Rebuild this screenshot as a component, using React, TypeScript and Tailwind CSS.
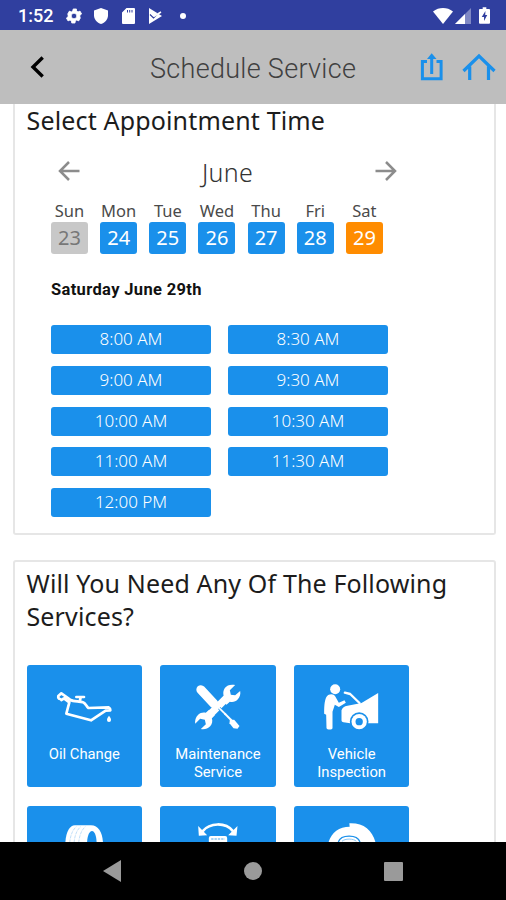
import { ReactNode } from "react";
import clsx from "clsx";

interface Service {
    id: string
    name?: string
    viewBox: string
    icon: ReactNode
}

const days = [
    { label: "Sun", date: 23, status: "disabled" },
    { label: "Mon", date: 24, status: "open" },
    { label: "Tue", date: 25, status: "open" },
    { label: "Wed", date: 26, status: "open" },
    { label: "Thu", date: 27, status: "open" },
    { label: "Fri", date: 28, status: "open" },
    { label: "Sat", date: 29, status: "selected" },
]

const times = ["8:00 AM", "8:30 AM", "9:00 AM", "9:30 AM", "10:00 AM", "10:30 AM", "11:00 AM", "11:30 AM", "12:00 PM"]

const services: Service[] = [
    {
        id: "oil",
        name: "Oil Change",
        viewBox: "108 80 171 150",
        icon: <>
            <path d="M120 131c-5-1-6-5-5-9l9-8 20 14 8 6c8 5 28 3 37 7 8 3 10 12 16 17l61-2 4 4 1 5-14 1-44 29-74-20 9-34-16-12-8 5" fill="none" stroke="white" strokeWidth="8" strokeLinejoin="round" strokeLinecap="round" />
            <path d="M169 125h23M182 126l-3 13" stroke="white" strokeWidth="8" strokeLinecap="round" />
            <path d="M267 181c4 5 6 9 6 13a6 6 0 0 1-12 0c0-4 2-8 6-13z" fill="white" />
        </>,
    },
    {
        id: "maintenance",
        name: "Maintenance Service",
        viewBox: "110.5 80 171 150",
        icon: <>
            <path d="M146 103l39 42" stroke="white" strokeWidth="27" strokeLinecap="round" />
            <path d="M190 147l50 50" stroke="white" strokeWidth="6" />
            <path d="M233 194l13-1 16 19-6 8-12-1-12-15z" fill="white" />
            <path d="M167 184l60-60" stroke="white" strokeWidth="22" />
            <path d="M249 89c-12-3-25 0-31 9-5 8-6 17-3 24l-9 9 17 17 10-9c8 3 18 0 24-7 6-7 9-16 7-25l-15 13-13-2-3-13z" fill="white" />
            <path d="M146 221c11 2 21-1 28-8 6-7 8-16 5-24l9-9-17-17-10 9c-8-2-17 0-23 6-8 8-10 16-9 27l15-15 14 3 3 14z" fill="white" />
            <path d="M201 158l16 17" stroke="#1a90eb" strokeWidth="9" />
            <path d="M193 150l28 28" stroke="white" strokeWidth="5" />
        </>,
    },
    {
        id: "inspection",
        name: "Vehicle Inspection",
        viewBox: "110.5 80 171 150",
        icon: <>
            <circle cx="147" cy="102" r="15" fill="white" />
            <path d="M126 119c8-4 18-3 21 4l11 19 17-7 4 7-21 13-12-7-7 21v49c0 6-17 6-18 0l-1-40-6-3c0-25 1-48 12-56z" fill="white" />
            <path d="M176 112l16 4 28 27" fill="none" stroke="white" strokeWidth="7" strokeLinejoin="round" strokeLinecap="round" />
            <path d="M166 165c3-9 8-12 18-14l42-8 50-30v91h-30H192l-20-3c-4-1-6-3-6-7z" fill="white" />
            <circle cx="219" cy="199" r="28" fill="#1a90eb" />
            <circle cx="219" cy="199" r="23" fill="white" />
            <circle cx="219" cy="199" r="11" fill="#1a90eb" />
        </>,
    },
    {
        id: "tires",
        viewBox: "108 85 171 150",
        icon: <>
            <path d="M136 150c0-32 11-58 29-58h48c24 0 36 25 36 58z" fill="white" />
            <path d="M201 150c0-26 7-41 15-41s14 15 14 41z" fill="#1a90eb" />
            <path d="M149 145c2-22 8-39 20-49M162 145c2-22 8-39 20-49M176 145c2-22 8-39 20-49" fill="none" stroke="#c2e0f9" strokeWidth="3" strokeDasharray="10 3" />
        </>,
    },
    {
        id: "alignment",
        viewBox: "508.5 85 171 150",
        icon: <>
            <path d="M549 110c22-27 69-28 92 0" fill="none" stroke="white" strokeWidth="8" />
            <path d="M536 94l2 29 25-1zM654 94l-3 29-25-1z" fill="white" />
            <rect x="568" y="124" width="55" height="60" rx="6" fill="white" />
            <path d="M575 133h41" stroke="#8bc7f5" strokeWidth="4" strokeDasharray="7 3" />
        </>,
    },
    {
        id: "brakes",
        viewBox: "162 85 171 150",
        icon: <>
            <path d="M177 150c6-33 31-54 65-54l-1-10c45-2 72 23 80 64z" fill="white" />
            <path d="M208 142c8-23 56-24 65 0" fill="none" stroke="#1a90eb" strokeWidth="4" />
            <path d="M219 140c8-9 35-9 43 0" fill="none" stroke="#8bc7f5" strokeWidth="3" />
        </>,
    },
]

function StatusBar() {
    return <div className="flex h-[30px] shrink-0 items-center bg-[#303f9f] pl-[18px] pr-[16px] pt-[1px] text-white">
        <span className="w-[35px] font-[Roboto] text-[18px] font-medium leading-none">1:52</span>
        <svg className="ml-[13px]" width="16" height="16" viewBox="2 2 20 20" fill="white">
            <path stroke="white" d="M19.4 13c.1-.6.1-1.300 0-2l2.100-1.600-2-3.500-2.500 1c-.5-.4-1.100-.7-1.700-1L15 3.200h-4l-.6 2.700c-.6.3-1.200.6-1.700 1l-2.500-1-2 3.500L4.600 11c-.1.700-.1 1.400 0 2l-2.100 1.600 2 3.500 2.500-1c.5.4 1.100.8 1.700 1l.5 2.700h4l.5-2.700c.6-.3 1.200-.6 1.700-1l2.500 1 2-3.500zM12 15.500a3.500 3.500 0 1 1 0-7 3.500 3.500 0 0 1 0 7z" />
        </svg>
        <svg className="ml-[12px]" width="14" height="16" viewBox="0 0 14 16" fill="white">
            <path d="M7 0l7 2.500v5C14 11 11 15 7 16 3 15 0 11 0 7.500v-5z" />
        </svg>
        <svg className="ml-[14px]" width="13" height="16" viewBox="0 0 13 16" fill="white">
            <path fillRule="evenodd" d="M4.500 0H12a1 1 0 0 1 1 1v14a1 1 0 0 1-1 1H1a1 1 0 0 1-1-1V4.500zM5 2v2.500h1V2zm2.200 0v2.500h1V2zm2.300 0v2.500h1V2z" />
        </svg>
        <svg className="ml-[13px]" width="15" height="16" viewBox="0 0 15 16">
            <path d="M1 0l13 8L1 16z" fill="white" />
            <path d="M2 6.500l3.500 3.500L14 1.500" fill="none" stroke="#303f9f" strokeWidth="1.200" />
            <path d="M3.500 5.500l3 2.500L13 4" fill="none" stroke="white" strokeWidth="1.500" />
        </svg>
        <span className="ml-[17px] size-[6px] rounded-full bg-white" />
        <svg className="ml-auto" width="20" height="16" viewBox="0 0 20 16" fill="white">
            <path d="M0 3.500c6-4.600 14-4.600 20 0L10 16z" />
        </svg>
        <svg className="ml-[2px]" width="16" height="16" viewBox="0 0 16 16">
            <path d="M16 0v16H0z" fill="#7f88c4" />
            <path d="M10 6v10H0z" fill="white" />
        </svg>
        <svg className="ml-[8px]" width="11" height="17" viewBox="0 0 12 18">
            <path d="M4 0h4v2h3a1 1 0 0 1 1 1v14a1 1 0 0 1-1 1H1a1 1 0 0 1-1-1V3a1 1 0 0 1 1-1h3z" fill="white" />
            <path d="M7 4L3 10.500h2.500V15L9 8.500H6.800z" fill="#303f9f" />
        </svg>
    </div>
}

function Header() {
    return <header className="flex h-[74px] shrink-0 items-center bg-[#bebebe] pl-[30px] pr-[10px]">
        <svg width="15" height="22" viewBox="0 0 15 22" fill="none" stroke="black" strokeWidth="3.400">
            <path d="M12.700 1.500L3 11l9.700 9.500" />
        </svg>
        <h1 className="ml-[105px] mt-[4px] w-[208px] whitespace-nowrap font-[Roboto] text-[27px] font-light leading-none tracking-[0.3px] text-[#404040]">Schedule Service</h1>
        <svg className="ml-[62px]" width="24" height="28" viewBox="0 0 24 28" fill="none" stroke="#1a90eb" strokeWidth="3">
            <path d="M7 8.500H2.400v17.200h18.700V8.500H16.500M11.700 21V4" />
            <path d="M7 6l4.700-5.700L16.500 6z" fill="#1a90eb" stroke="none" />
        </svg>
        <svg className="ml-auto" width="34" height="28" viewBox="0 0 34 28" fill="none" stroke="#1a90eb" strokeWidth="3.200">
            <path d="M1.500 18L17 3l15.500 15M7.700 13.500V27M26.500 13.500V27" />
        </svg>
    </header>
}

function Arrow({ flip = false }: { flip?: boolean }) {
    return <svg className={clsx(flip && "rotate-180")} width="22" height="20" viewBox="0 0 22 20" fill="none" stroke="#8c8c8c" strokeWidth="2.500">
        <path d="M21.500 10H2M11 1L2 10l9 9" />
    </svg>
}

export default function App() {
    return <div className="flex h-[900px] w-[506px] flex-col overflow-hidden bg-white font-['Noto_Sans',sans-serif] text-[#1c1c1c]">
        <StatusBar />
        <Header />

        <main className="h-[738px] overflow-hidden pl-[13px] pr-[10px]">
            {/* APPOINTMENT TIME */}
            <section className="h-[431px] rounded-b-[3px] border-2 border-t-0 border-[#e6e6e6] pl-[11.500px]">
                <h2 className="h-[32px] whitespace-nowrap text-[25px] leading-[32px] tracking-[0.160px]">Select Appointment Time</h2>
                <div className="ml-[25px] mt-[17px] flex h-[36px] w-[346px] items-center justify-between pl-[6px]">
                    <Arrow />
                    <span className="pt-[4px] text-[25px] font-light tracking-[0.3px] text-[#333]">June</span>
                    <Arrow flip />
                </div>
                <div className="ml-[24.500px] mt-[12px] flex w-[332px] justify-between">
                    {days.map((day) => <div className="flex w-[37px] flex-col items-center" key={day.date}>
                        <span className="text-[16.500px] leading-[20px] text-[#4a4a4a]">{day.label}</span>
                        <button className={clsx(
                            "mt-px h-[32px] w-[37px] rounded-[3px] text-[20px] leading-[30px]",
                            day.status === "disabled" && "bg-[#c8c8c8] text-[#777]",
                            day.status === "open" && "bg-[#1a90eb] text-white",
                            day.status === "selected" && "bg-[#ff8c00] text-white",
                        )}>{day.date}</button>
                    </div>)}
                </div>
                <p className="ml-[24.500px] mt-[26px] font-[Roboto] text-[16.5px] font-bold leading-[20px] tracking-[0.350px] text-[#111]">Saturday June 29th</p>
                <div className="ml-[24.500px] mt-[25px] grid w-[337px] grid-cols-2 gap-x-[17px] gap-y-[11.800px]">
                    {times.map((time) => <button className="h-[29px] rounded-[3px] bg-[#1a90eb] pb-[2px] text-[17px] font-light leading-[25px] text-white" key={time}>{time}</button>)}
                </div>
            </section>

            {/* SERVICES */}
            <section className="mt-[25px] h-[400px] rounded-t-[3px] border-2 border-[#e6e6e6] pl-[11.500px] pt-[5px]">
                <h2 className="w-[450px] text-[25px] leading-[33px] tracking-[0.140px]">Will You Need Any Of The Following Services?</h2>
                <div className="mt-[32px] grid w-[383px] grid-cols-3 gap-x-[18px] gap-y-[19px]">
                    {services.map((service) => <button className="flex h-[122px] flex-col items-center rounded-[3px] bg-[#1a90eb] pt-[17px] font-[Roboto] text-[14.800px] leading-[18px] text-white" key={service.id}>
                        <svg className="shrink-0" width="57" height="50" viewBox={service.viewBox}>{service.icon}</svg>
                        {service.name && <span className="mt-[12.500px] w-[96px]">{service.name}</span>}
                    </button>)}
                </div>
            </section>
        </main>

        {/* NAVIGATION */}
        <nav className="flex h-[58px] shrink-0 items-center justify-between bg-black pl-[103px] pr-[103px]">
            <svg width="18" height="22" viewBox="0 0 18 22"><path d="M18 0v22L0 11z" fill="#9a9a9a" /></svg>
            <span className="ml-px size-[18px] rounded-full bg-[#9a9a9a]" />
            <span className="size-[19px] rounded-[1px] bg-[#9a9a9a]" />
        </nav>
    </div>
}
